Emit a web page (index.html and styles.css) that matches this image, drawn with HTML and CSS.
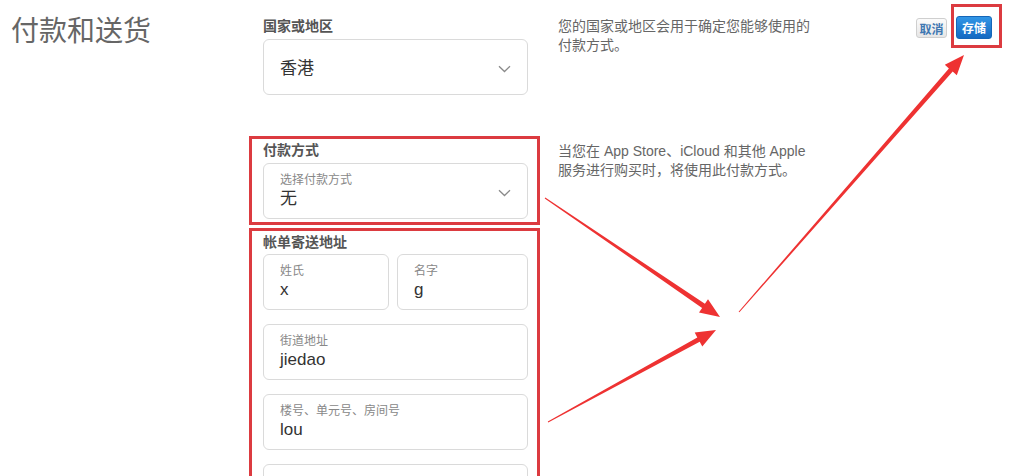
FILE: index.html
```html
<!DOCTYPE html>
<html lang="zh-CN">
<head>
    <meta charset="UTF-8">
    <meta name="viewport" content="width=device-width, initial-scale=1.0">
    <title>付款和送货</title>
    <link rel="stylesheet" href="styles.css">
</head>
<body>
<div class="page">
    <h1 class="title">付款和送货</h1>

    <div class="main">
        <div class="row">
            <div class="field-col">
                <div class="label">国家或地区</div>
                <div class="select select-single">
                    <span class="value">香港</span>
                    <svg class="chevron" width="13" height="8" viewBox="0 0 13 8"><path d="M1 1.2 L6.5 6.5 L12 1.2" fill="none" stroke="#8a8a8a" stroke-width="1.3"/></svg>
                </div>
            </div>
            <p class="desc">您的国家或地区会用于确定您能够使用的<br>付款方式。</p>
        </div>

        <div class="row row-payment">
            <div class="field-col">
                <div class="marked">
                    <div class="label">付款方式</div>
                    <div class="select">
                        <span class="small-label">选择付款方式</span>
                        <span class="value">无</span>
                        <svg class="chevron" width="13" height="8" viewBox="0 0 13 8"><path d="M1 1.2 L6.5 6.5 L12 1.2" fill="none" stroke="#8a8a8a" stroke-width="1.3"/></svg>
                    </div>
                </div>
            </div>
            <p class="desc desc-payment">当您在 App Store、iCloud 和其他 Apple<br>服务进行购买时，将使用此付款方式。</p>
        </div>

        <div class="row row-address">
            <div class="field-col">
                <div class="marked marked-open">
                    <div class="label label-address">帐单寄送地址</div>
                    <div class="name-row">
                        <div class="field">
                            <span class="small-label">姓氏</span>
                            <span class="value">x</span>
                        </div>
                        <div class="field">
                            <span class="small-label">名字</span>
                            <span class="value">g</span>
                        </div>
                    </div>
                    <div class="field">
                        <span class="small-label">街道地址</span>
                        <span class="value">jiedao</span>
                    </div>
                    <div class="field">
                        <span class="small-label">楼号、单元号、房间号</span>
                        <span class="value">lou</span>
                    </div>
                    <div class="field"></div>
                </div>
            </div>
        </div>
    </div>

    <div class="actions">
        <button class="btn btn-cancel">取消</button>
        <span class="mark-btn">
            <button class="btn btn-save">存储</button>
        </span>
    </div>

    <!-- annotation arrows -->
    <svg class="arrows" width="1021" height="476" viewBox="0 0 1021 476">
        <polygon points="544.7,198.4 702.1,307.9 699,312.4 720,317 708,299.2 704.9,303.7 545.3,197.6"/>
        <polygon points="548.2,422.4 699.7,341.8 702.3,346.6 716,330 694.7,332.6 697.3,337.4 547.8,421.6"/>
        <polygon points="739.4,312.3 952.7,71.6 956.8,75.3 964,55 944.8,64.7 948.9,68.4 738.6,311.7"/>
    </svg>
</div>
</body>
</html>
```

FILE: styles.css
```css
* {
    box-sizing: border-box;
}

body {
    margin: 0;
    background: #fff;
    font-family: "Liberation Sans", "Noto Sans CJK SC", sans-serif;
    color: #333;
}

.page {
    position: relative;
    display: flex;
    align-items: flex-start;
    height: 476px;
    overflow: hidden;
}

.title {
    width: 263px;
    margin: 0;
    padding: 14px 0 0 11px;
    font-size: 28px;
    line-height: 36px;
    font-weight: normal;
    color: #666;
}

.main {
    display: flex;
    flex-direction: column;
    padding-top: 17px;
}

.row {
    display: flex;
    gap: 30px;
}

.row-payment {
    margin-top: 41px;
}

.row-address {
    margin-top: 3px;
}

.field-col {
    width: 265px;
}

.label {
    font-size: 14px;
    line-height: 18px;
    font-weight: bold;
    color: #555;
    margin-bottom: 4px;
}

.label-address {
    margin-bottom: 3px;
}

.desc {
    margin: 0;
    width: 260px;
    font-size: 14px;
    line-height: 19px;
    color: #666;
    white-space: nowrap;
}

.desc-payment {
    padding-top: 6px;
}

/* red frames drawn around a group */
.marked {
    margin: 0 -12px 0 -14px;
    padding: 2px 9px 3px 11px;
    border: 3px solid #dc3b40;
}

.marked-open {
    padding-bottom: 40px;
}

.select,
.field {
    position: relative;
    height: 56px;
    border: 1px solid #dadada;
    border-radius: 6px;
    background: #fff;
    padding: 8px 16px 0;
    display: flex;
    flex-direction: column;
}

.select-single {
    justify-content: center;
    padding-top: 4px;
}

.small-label {
    font-size: 12px;
    line-height: 16px;
    color: #888;
}

.value {
    font-size: 17px;
    line-height: 22px;
    color: #333;
}

.chevron {
    position: absolute;
    right: 16px;
    top: 25px;
}

.name-row {
    display: grid;
    grid-template-columns: 126px 1fr;
    gap: 8px;
}

.field {
    margin-bottom: 14px;
}

.actions {
    margin-left: auto;
    padding: 4px 19px 0 0;
    display: flex;
    align-items: flex-start;
}

.btn {
    font-family: "Liberation Sans", "Noto Sans CJK SC", sans-serif;
    font-size: 12px;
    font-weight: bold;
    border-radius: 3px;
    padding: 0;
    cursor: pointer;
}

.btn-cancel {
    margin-top: 14px;
    margin-right: 4px;
    width: 31px;
    height: 20px;
    border: 1px solid #cfcfcf;
    background: linear-gradient(#fbfbfb, #e6e6e6);
    color: #3f78b2;
}

.mark-btn {
    display: inline-block;
    padding: 9px 7px 6px 2px;
    border: 3px solid #dc3b40;
}

.btn-save {
    display: block;
    width: 36px;
    height: 23px;
    border: 1px solid #1566b8;
    background: linear-gradient(#3196e6, #1469c2);
    color: #fff;
}

.arrows {
    position: absolute;
    top: 0;
    left: 0;
    pointer-events: none;
}

.arrows polygon {
    fill: #ee3232;
}
```
